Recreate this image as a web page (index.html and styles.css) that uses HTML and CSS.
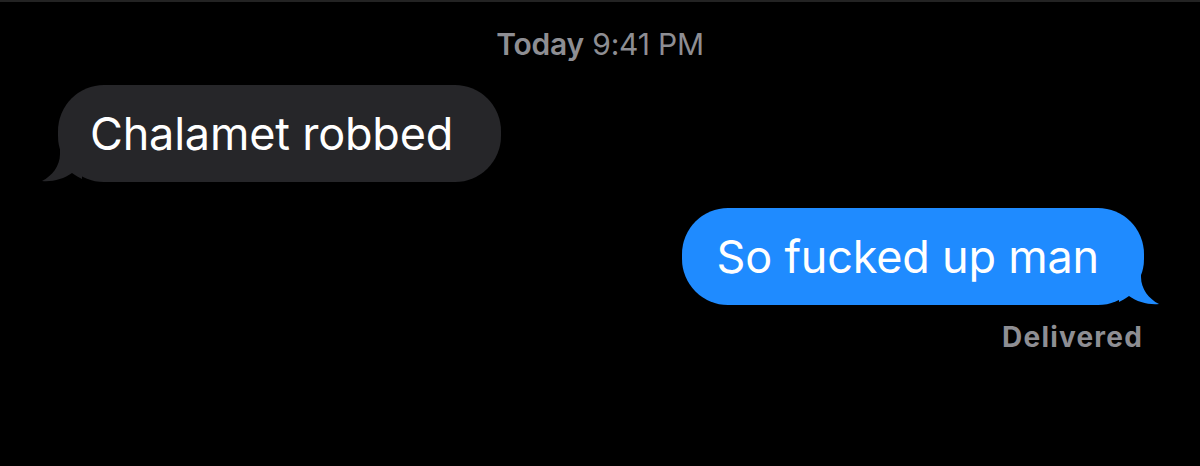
FILE: index.html
```html
<!DOCTYPE html>
<html>
<head>
<meta charset="utf-8">
<link rel="stylesheet" href="styles.css">
</head>
<body>
<div class="screen">
  <div class="timestamp"><span class="day">Today</span> 9:41 PM</div>
  <div class="thread">
    <div class="row row-in">
      <div class="bubble bubble-in">
        Chalamet robbed
        <svg class="tail tail-in" width="40" height="36" viewBox="0 0 40 36"><path d="M18 0 L18 8 C18 20 10 30 0 35 C10 36 22 33 30 27 C34 30 38 32 40 33 L40 0 Z" fill="#262629"/></svg>
      </div>
    </div>
    <div class="row row-out">
      <div class="bubble bubble-out">
        So fucked up man
        <svg class="tail tail-out" width="40" height="36" viewBox="0 0 40 36"><path d="M22 0 L22 8 C22 20 30 30 40 35 C30 36 18 33 10 27 C6 30 2 32 0 33 L0 0 Z" fill="#1f8bff"/></svg>
      </div>
    </div>
    <div class="status">Delivered</div>
  </div>
</div>
</body>
</html>
```

FILE: styles.css
```css
html, body {
  margin: 0;
  padding: 0;
  background: #000;
}
.screen {
  width: 1200px;
  height: 466px;
  box-sizing: border-box;
  border-top: 2px solid #232323;
  font-family: Inter, "Liberation Sans", sans-serif;
  overflow: hidden;
}
.timestamp {
  text-align: center;
  color: #8e8e93;
  font-size: 30px;
  line-height: 36px;
  padding-top: 24px;
  letter-spacing: -0.2px;
}
.timestamp .day {
  font-weight: 600;
}
.thread {
  display: flex;
  flex-direction: column;
  padding: 23px 56px 0 58px;
}
.row {
  display: flex;
}
.row-out {
  justify-content: flex-end;
  margin-top: 26px;
}
.bubble {
  position: relative;
  font-size: 45px;
  line-height: 97px;
  height: 97px;
  border-radius: 46px;
  color: #fff;
  letter-spacing: -0.2px;
}
.bubble-in {
  background: #262629;
  padding: 0 48px 0 32px;
}
.bubble-out {
  background: #1f8bff;
  padding: 0 45px 0 34px;
}
.tail {
  position: absolute;
  bottom: 0;
}
.tail-in {
  left: -16px;
}
.tail-out {
  right: -15px;
}
.status {
  align-self: flex-end;
  color: #8e8e93;
  font-size: 28px;
  font-weight: 700;
  letter-spacing: 1.2px;
  line-height: 32px;
  margin-top: 16px;
  margin-right: 1px;
}
```
